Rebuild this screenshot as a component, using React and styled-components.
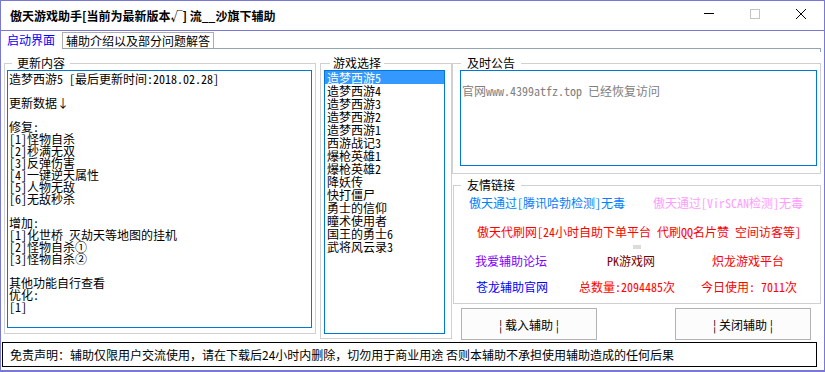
import React from "react";
import styled, { createGlobalStyle } from "styled-components";

const UI = `"Noto Sans CJK SC", "Microsoft YaHei", sans-serif`;
const SONG = `"Noto Sans Mono CJK SC", "Noto Sans CJK SC", monospace`;

const GlobalStyle = createGlobalStyle`
  html, body {
    margin: 0;
    padding: 0;
    background: #fff;
  }
  * {
    box-sizing: border-box;
  }
`;

const updateText = `造梦西游5 [最后更新时间:2018.02.28]

更新数据↓

修复:
[1]怪物自杀
[2]秒满无双
[3]反弹伤害
[4]一键逆天属性
[5]人物无敌
[6]无敌秒杀

增加:
[1]化世桥 灭劫天等地图的挂机
[2]怪物自杀①
[3]怪物自杀②

其他功能自行查看
优化:
[1]`;

const games = [
  "造梦西游5",
  "造梦西游4",
  "造梦西游3",
  "造梦西游2",
  "造梦西游1",
  "西游战记3",
  "爆枪英雄1",
  "爆枪英雄2",
  "降妖传",
  "快打僵尸",
  "勇士的信仰",
  "瞳术使用者",
  "国王的勇士6",
  "武将风云录3",
];

export default function App() {
  return (
    <>
      <GlobalStyle />
      <Window>
        <TitleBar>
          <Title>傲天游戏助手[当前为最新版本√] 流__沙旗下辅助</Title>
          <Captions>
            <CaptionButton>
              <svg width="10" height="10" viewBox="0 0 10 10">
                <line x1="0" y1="4.5" x2="10" y2="4.5" stroke="#000" strokeWidth="1" />
              </svg>
            </CaptionButton>
            <CaptionButton>
              <svg width="10" height="10" viewBox="0 0 10 10">
                <rect x="0.5" y="0.5" width="9" height="9" fill="none" stroke="#c4c4c4" strokeWidth="1" />
              </svg>
            </CaptionButton>
            <CaptionButton>
              <svg width="10" height="10" viewBox="0 0 10 10">
                <path d="M0 0 L10 10 M10 0 L0 10" stroke="#000" strokeWidth="1" />
              </svg>
            </CaptionButton>
          </Captions>
        </TitleBar>

        <TabStrip>
          <Tab $active>启动界面</Tab>
          <Tab>辅助介绍以及部分问题解答</Tab>
          <TabLine />
        </TabStrip>

        <Panel>
          <GroupBox $w={312} $h={277} $pl={2}>
            <Legend $ml={5} $px={5}>更新内容</Legend>
            <UpdateBox>{updateText}</UpdateBox>
          </GroupBox>

          <GroupBox $w={132} $h={282} $pl={3} $ml={4}>
            <Legend $ml={6} $px={3}>游戏选择</Legend>
            <ListBox>
              {games.map((g, i) => (
                <ListItem key={g} $selected={i === 0}>
                  {g}
                </ListItem>
              ))}
            </ListBox>
          </GroupBox>

          <RightColumn>
            <GroupBox $w={369} $h={117} $pl={7}>
              <Legend $ml={1} $px={6}>及时公告</Legend>
              <NoticeBox>官网www.4399atfz.top 已经恢复访问</NoticeBox>
            </GroupBox>

            <GroupBox $w={368} $h={125} $pl={0} $ml={1} $mt={5} $pt={0}>
              <Legend $ml={7} $px={6}>友情链接</Legend>
              <LinkRow $mt={6} $pl={15} $cols="184px auto">
                <LinkText $color="#0080ff">傲天通过[腾讯哈勃检测]无毒</LinkText>
                <LinkText $color="#ff9cff">傲天通过[VirSCAN检测]无毒</LinkText>
              </LinkRow>
              <LinkRow $mt={17} $pl={23} $cols="auto">
                <LinkText $color="#ff0000">
                  傲天代刷网[24小时自助下单平台 代刷QQ名片赞 空间访客等]
                </LinkText>
              </LinkRow>
              <LinkRow $mt={7} $pl={179} $cols="auto">
                <Blip />
              </LinkRow>
              <LinkRow $mt={6} $pl={21} $cols="132px 105px auto">
                <LinkText $color="#8000ff">我爱辅助论坛</LinkText>
                <LinkText $color="#800000">PK游戏网</LinkText>
                <LinkText $color="#ff0000">炽龙游戏平台</LinkText>
              </LinkRow>
              <LinkRow $mt={14} $pl={22} $cols="103px 122px auto">
                <LinkText $color="#0000ff">苍龙辅助官网</LinkText>
                <LinkText $color="#ff0000">总数量:2094485次</LinkText>
                <LinkText $color="#ff0000">今日使用: 7011次</LinkText>
              </LinkRow>
            </GroupBox>

            <ButtonRow>
              <Button>¦ 载入辅助 ¦</Button>
              <Button>¦ 关闭辅助 ¦</Button>
            </ButtonRow>
          </RightColumn>
        </Panel>

        <StatusBar>
          免责声明：辅助仅限用户交流使用，请在下载后24小时内删除，切勿用于商业用途 否则本辅助不承担使用辅助造成的任何后果
        </StatusBar>
      </Window>
    </>
  );
}

const Window = styled.div`
  width: 825px;
  height: 372px;
  border: 1px solid #7878d7;
  border-bottom-width: 2px;
  background: #fff;
  display: flex;
  flex-direction: column;
  font-family: ${UI};
  font-size: 12px;
  color: #000;
  overflow: hidden;
`;

const TitleBar = styled.div`
  height: 30px;
  flex: 0 0 30px;
  border-bottom: 1px solid #7878d7;
  display: flex;
  align-items: flex-start;
`;

const Title = styled.div`
  margin: 9px 0 0 9px;
  line-height: 12px;
  font-size: 12px;
  font-weight: bold;
  white-space: nowrap;
`;

const Captions = styled.div`
  margin-left: auto;
  display: flex;
`;

const CaptionButton = styled.div`
  width: 46px;
  height: 25px;
  display: flex;
  align-items: center;
  justify-content: center;

  svg {
    display: block;
  }
`;

const TabStrip = styled.div`
  height: 18px;
  flex: 0 0 18px;
  display: flex;
`;

const Tab = styled.div`
  height: ${(p) => (p.$active ? 18 : 17)}px;
  margin-top: ${(p) => (p.$active ? 0 : 1)}px;
  width: ${(p) => (p.$active ? 61 : 152)}px;
  padding-left: ${(p) => (p.$active ? 6 : 3)}px;
  line-height: ${(p) => (p.$active ? 18 : 15)}px;
  color: ${(p) => (p.$active ? "#0000ff" : "#000")};
  border: ${(p) => (p.$active ? "none" : "1px solid #adadad")};
  border-bottom-color: #93a4b2;
  white-space: nowrap;
`;

const TabLine = styled.div`
  position: relative;
  width: 607px;
  border-bottom: 1px solid #93a4b2;

  &::after {
    content: "";
    position: absolute;
    right: 0;
    top: 100%;
    width: 1px;
    height: 4px;
    background: #93a4b2;
  }
`;

const Panel = styled.div`
  height: 293px;
  flex: 0 0 293px;
  padding: 8px 0 0 3px;
  display: flex;
  align-items: flex-start;
`;

const GroupBox = styled.fieldset`
  margin: ${(p) => p.$mt || 0}px 0 0 ${(p) => p.$ml || 0}px;
  width: ${(p) => p.$w}px;
  height: ${(p) => p.$h}px;
  min-width: 0;
  padding: ${(p) => p.$pt ?? 1}px 0 0 ${(p) => p.$pl}px;
  border: 1px solid #d0d0d0;
  flex: none;
`;

const Legend = styled.legend`
  margin-left: ${(p) => p.$ml}px;
  padding: 0 ${(p) => p.$px}px;
  height: 12px;
  line-height: 12px;
  font-size: 12px;
  white-space: nowrap;
`;

const UpdateBox = styled.div`
  width: 305px;
  height: 258px;
  border: 1px solid #0078d7;
  padding: 2px 0 0 1px;
  font-family: ${SONG};
  font-size: 12px;
  line-height: 12px;
  white-space: pre;
  overflow: hidden;
`;

const ListBox = styled.div`
  width: 121px;
  height: 264px;
  border: 1px solid #0078d7;
  overflow: hidden;
`;

const ListItem = styled.div`
  height: 13px;
  line-height: 13px;
  padding-left: 2px;
  font-family: ${SONG};
  font-size: 12px;
  white-space: nowrap;
  background: ${(p) => (p.$selected ? "#3399ff" : "transparent")};
  color: ${(p) => (p.$selected ? "#fff" : "#000")};
`;

const RightColumn = styled.div`
  width: 369px;
  display: flex;
  flex-direction: column;
`;

const NoticeBox = styled.div`
  width: 357px;
  height: 96px;
  border: 1px solid #0078d7;
  padding: 14px 0 0 1px;
  font-family: ${SONG};
  font-size: 12px;
  line-height: 12px;
  color: #808080;
  white-space: nowrap;
`;

const LinkRow = styled.div`
  margin-top: ${(p) => p.$mt}px;
  padding-left: ${(p) => p.$pl}px;
  display: grid;
  grid-template-columns: ${(p) => p.$cols};
  font-family: ${SONG};
  font-size: 12px;
  line-height: 12px;
  white-space: nowrap;
`;

const LinkText = styled.span`
  color: ${(p) => p.$color};
`;

const Blip = styled.span`
  display: block;
  width: 8px;
  height: 4px;
  background: #dcdcdc;
`;

const ButtonRow = styled.div`
  margin-top: 4px;
  padding: 0 10px 0 9px;
  display: flex;
  justify-content: space-between;
`;

const Button = styled.div`
  width: 136px;
  height: 32px;
  border: 1px solid #b2b2b2;
  background: #fcfcfc;
  display: flex;
  align-items: center;
  justify-content: center;
  font-size: 12px;
  color: #000;
  white-space: pre;
`;

const StatusBar = styled.div`
  margin-left: 1px;
  width: 815px;
  height: 25px;
  flex: 0 0 25px;
  border: 1px solid #000;
  padding-left: 7px;
  line-height: 23px;
  font-size: 12px;
  white-space: nowrap;
  overflow: hidden;
`;
